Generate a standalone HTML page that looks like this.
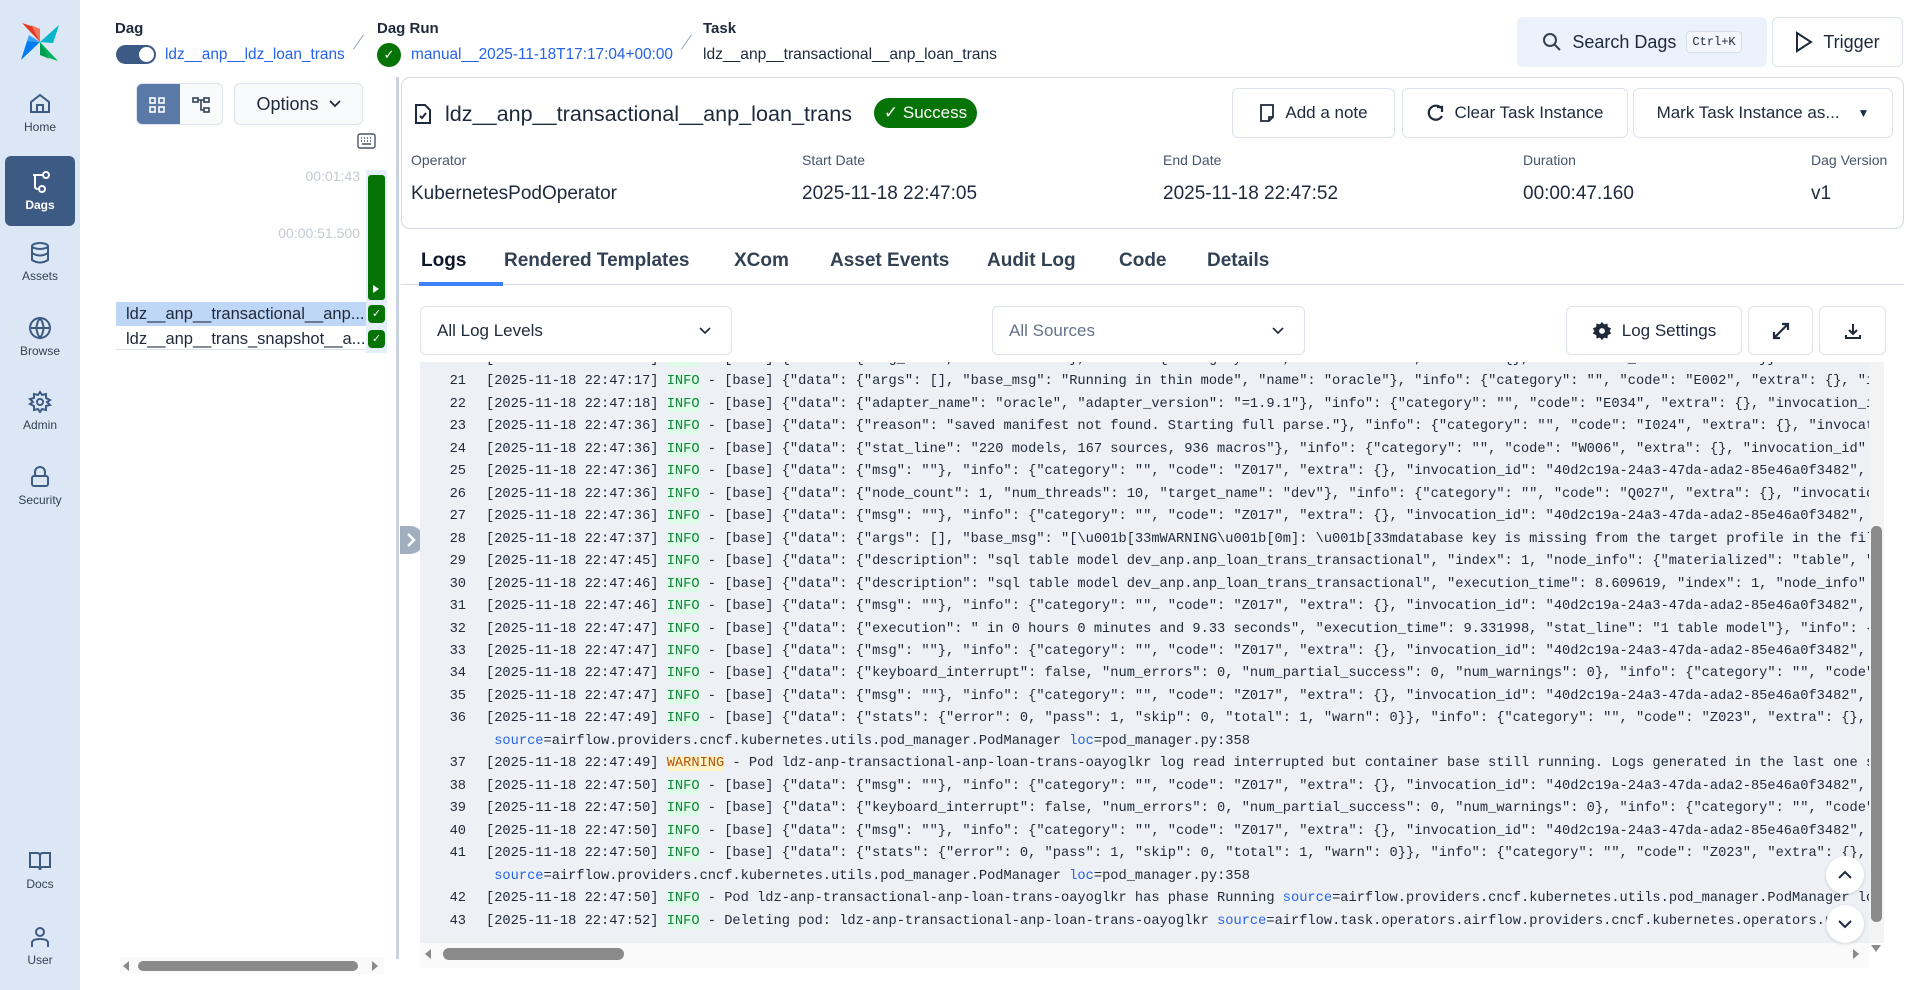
<!DOCTYPE html>
<html><head><meta charset="utf-8"><style>
*{box-sizing:border-box;margin:0;padding:0}
body{width:1918px;height:990px;overflow:hidden;background:#fff;font-family:"Liberation Sans",Arial,sans-serif;color:#1e293b;position:relative}
.abs{position:absolute}
.side{left:0;top:0;width:80px;height:990px;background:#dce7f5}
.nav{position:absolute;left:0;width:80px;text-align:center;font-size:12px;color:#334155}
.nav svg{display:block;margin:0 auto 4px}
.btn{position:absolute;border:1px solid #dde3ea;border-radius:6px;background:#fff;display:flex;align-items:center;justify-content:center;font-size:17px;color:#1e293b;gap:10px}
.lbl{position:absolute;font-size:14px;color:#475569}
.val{position:absolute;font-size:19px;color:#1e293b}
.tab{position:absolute;top:250px;font-size:19px;font-weight:bold;color:#334155}
.log{left:420px;top:362px;width:1449px;height:581px;background:#edf0f5;overflow:hidden;font-family:"Liberation Mono",monospace;font-size:13.7px;color:#1f2937}
.ln{position:absolute;left:0;height:22.46px;line-height:22.46px;white-space:pre;width:1449px}
.ln .n{display:inline-block;width:46px;text-align:right;margin-right:20px}
.i{color:#15803d;background:#dcfce7}
.w{color:#b45309;background:#fef3c7;border-radius:3px}
.s{color:#2563eb}
</style></head><body>
<div class="abs side"></div>
<svg class="abs" style="left:19px;top:21px" width="42" height="42" viewBox="0 0 42 42">
<path d="M21 21 L3 2 L21 8 Z" fill="#e43921"/><path d="M21 21 L21 8 L12 4 Z" fill="#f0745a"/>
<path d="M21 21 L40 4 L34 22 Z" fill="#00c7d4"/><path d="M21 21 L34 22 L40 4Z" fill="#11a9c6" opacity=".6"/>
<path d="M21 21 L39 40 L21 34 Z" fill="#04b05c"/><path d="M21 21 L21 34 L30 38Z" fill="#00873f" opacity=".5"/>
<path d="M21 21 L2 39 L8 20 Z" fill="#017cee"/><path d="M21 21 L8 20 L10 14Z" fill="#3aa0ff"/>
</svg>
<div class="nav" style="top:92px"><svg width="24" height="24" viewBox="0 0 24 24" fill="none" stroke="#3d5a80" stroke-width="2"><path d="M3 10 L12 3 L21 10 V20 H3 Z"/><path d="M9 20 V13 H15 V20"/></svg>Home</div>
<div class="abs" style="left:5px;top:156px;width:70px;height:70px;background:#3d5a85;border-radius:6px"></div>
<div class="nav" style="top:170px;color:#fff;font-weight:bold"><svg width="24" height="24" viewBox="0 0 24 24" fill="none" stroke="#fff" stroke-width="2"><circle cx="18" cy="5" r="3"/><circle cx="14" cy="19" r="3"/><path d="M15 5 H5 M7 5 V17 Q7 19 11 19"/></svg>Dags</div>
<div class="nav" style="top:241px"><svg width="24" height="24" viewBox="0 0 24 24" fill="none" stroke="#3d5a80" stroke-width="2"><ellipse cx="12" cy="5" rx="8" ry="3"/><path d="M4 5 V19 Q12 24 20 19 V5 M4 12 Q12 17 20 12"/></svg>Assets</div>
<div class="nav" style="top:316px"><svg width="24" height="24" viewBox="0 0 24 24" fill="none" stroke="#3d5a80" stroke-width="2"><circle cx="12" cy="12" r="10"/><path d="M2 12 H22 M12 2 Q5 12 12 22 Q19 12 12 2"/></svg>Browse</div>
<div class="nav" style="top:390px"><svg width="24" height="24" viewBox="0 0 24 24" fill="none" stroke="#3d5a80" stroke-width="2"><circle cx="12" cy="12" r="3"/><path d="M12 2 L14 5 L18 4 L18 8 L22 10 L19 12 L22 15 L18 16 L18 20 L14 19 L12 22 L10 19 L6 20 L6 16 L2 14 L5 12 L2 9 L6 8 L6 4 L10 5 Z"/></svg>Admin</div>
<div class="nav" style="top:465px"><svg width="24" height="24" viewBox="0 0 24 24" fill="none" stroke="#3d5a80" stroke-width="2"><rect x="4" y="11" width="16" height="10" rx="2"/><path d="M7 11 V7 a5 5 0 0 1 10 0 V11"/></svg>Security</div>
<div class="nav" style="top:849px"><svg width="24" height="24" viewBox="0 0 24 24" fill="none" stroke="#3d5a80" stroke-width="2"><path d="M2 4 H9 Q12 4 12 7 V21 Q12 18 9 18 H2 Z M22 4 H15 Q12 4 12 7 V21 Q12 18 15 18 H22 Z"/></svg>Docs</div>
<div class="nav" style="top:925px"><svg width="24" height="24" viewBox="0 0 24 24" fill="none" stroke="#3d5a80" stroke-width="2"><circle cx="12" cy="7" r="4"/><path d="M4 22 V18 Q4 14 12 14 Q20 14 20 18 V22"/></svg>User</div>

<div class="abs" style="left:115px;top:20px;font-size:15px;font-weight:bold">Dag</div>
<div class="abs" style="left:116px;top:45px;width:40px;height:19px;border-radius:10px;background:#3d5a85"><div style="position:absolute;right:2px;top:2px;width:15px;height:15px;border-radius:50%;background:#fff"></div></div>
<div class="abs" style="left:165px;top:46px;font-size:15.4px;color:#2563eb">ldz__anp__ldz_loan_trans</div>
<div class="abs" style="left:358px;top:33px;width:1px;height:18px;background:#94a3b8;transform:rotate(35deg)"></div>
<div class="abs" style="left:377px;top:20px;font-size:15px;font-weight:bold">Dag Run</div>
<div class="abs" style="left:377px;top:43px;width:24px;height:24px;border-radius:50%;background:#067306;color:#fff;font-size:13px;text-align:center;line-height:24px">✓</div>
<div class="abs" style="left:411px;top:46px;font-size:15.4px;color:#2563eb">manual__2025-11-18T17:17:04+00:00</div>
<div class="abs" style="left:686px;top:33px;width:1px;height:18px;background:#94a3b8;transform:rotate(35deg)"></div>
<div class="abs" style="left:703px;top:20px;font-size:15px;font-weight:bold">Task</div>
<div class="abs" style="left:703px;top:46px;font-size:15.6px">ldz__anp__transactional__anp_loan_trans</div>
<div class="btn" style="left:1517px;top:17px;width:250px;height:50px;background:#ebf2fb;border-color:#ebf2fb;font-size:18px"><svg width="20" height="20" viewBox="0 0 20 20" fill="none" stroke="#334155" stroke-width="2"><circle cx="8" cy="8" r="6"/><path d="M12.5 12.5 L18 18"/></svg>Search Dags<span style="font-family:'Liberation Mono',monospace;font-size:12px;border:1px solid #d6dde8;border-radius:4px;padding:3px 5px;background:#f3f6fa">Ctrl+K</span></div>
<div class="btn" style="left:1772px;top:17px;width:131px;height:50px;font-size:18px"><svg width="18" height="22" viewBox="0 0 18 22" fill="none" stroke="#1e293b" stroke-width="2"><path d="M2 2 L16 11 L2 20 Z"/></svg>Trigger</div>

<div class="abs" style="left:136px;top:83px;width:87px;height:42px;border:1px solid #dde3ea;border-radius:6px;background:#f8fafc;overflow:hidden"><div style="width:43px;height:42px;background:#5b79a6"></div></div>
<svg class="abs" style="left:148px;top:96px" width="18" height="18" viewBox="0 0 18 18" fill="none" stroke="#fff" stroke-width="1.6"><rect x="2" y="2" width="5" height="5"/><rect x="11" y="2" width="5" height="5"/><rect x="2" y="11" width="5" height="5"/><rect x="11" y="11" width="5" height="5"/></svg>
<svg class="abs" style="left:192px;top:96px" width="18" height="18" viewBox="0 0 18 18" fill="none" stroke="#334155" stroke-width="1.6"><rect x="1" y="2" width="5" height="4"/><rect x="12" y="2" width="5" height="4"/><rect x="12" y="12" width="5" height="4"/><path d="M6 4 H12 M9 4 V14 H12"/></svg>
<div class="btn" style="left:234px;top:83px;width:129px;height:42px;background:#f8fafc;font-size:18px">Options <svg width="12" height="8" viewBox="0 0 12 8" fill="none" stroke="#1e293b" stroke-width="1.8"><path d="M1 1 L6 6 L11 1"/></svg></div>
<svg class="abs" style="left:357px;top:133px" width="19" height="16" viewBox="0 0 19 16" fill="none" stroke="#475569" stroke-width="1.4"><rect x="1" y="1" width="17" height="14" rx="2"/><path d="M4 5h1M7 5h1M10 5h1M13 5h1M4 8h1M7 8h1M10 8h1M13 8h1M5 11h9"/></svg>
<div class="abs" style="right:1558px;top:168px;font-size:14px;color:#c4cad3">00:01:43</div>
<div class="abs" style="right:1558px;top:225px;font-size:14px;color:#c4cad3">00:00:51.500</div>
<div class="abs" style="left:366px;top:170px;width:21px;height:183px;background:#e5eefb"></div>
<div class="abs" style="left:368px;top:175px;width:17px;height:125px;background:#067306;border-radius:3px"></div>
<div class="abs" style="left:373px;top:285px;width:0;height:0;border-left:6px solid #fff;border-top:4px solid transparent;border-bottom:4px solid transparent"></div>
<div class="abs" style="left:116px;top:302px;width:250px;height:24px;background:#bed7f7"></div>
<div class="abs" style="left:116px;top:326px;width:250px;height:24px;border-bottom:1px solid #dbe4f0"></div>
<div class="abs" style="left:126px;top:305px;font-size:16.5px">ldz__anp__transactional__anp...</div>
<div class="abs" style="left:126px;top:330px;font-size:16.5px">ldz__anp__trans_snapshot__a...</div>
<div class="abs" style="left:368px;top:305px;width:17px;height:18px;border-radius:4px;background:#067306;color:#fff;font-size:11px;text-align:center;line-height:18px">✓</div>
<div class="abs" style="left:368px;top:330px;width:17px;height:18px;border-radius:4px;background:#067306;color:#fff;font-size:11px;text-align:center;line-height:18px">✓</div>
<div class="abs" style="left:120px;top:957px;width:264px;height:17px;background:#fafafa"></div>
<div class="abs" style="left:138px;top:961px;width:220px;height:10px;border-radius:5px;background:#8a8a8a"></div>
<div class="abs" style="left:123px;top:961px;border-right:6px solid #8a8a8a;border-top:5px solid transparent;border-bottom:5px solid transparent"></div>
<div class="abs" style="left:372px;top:961px;border-left:6px solid #8a8a8a;border-top:5px solid transparent;border-bottom:5px solid transparent"></div>
<div class="abs" style="left:396px;top:77px;width:3px;height:882px;background:#c9d2de"></div>
<div class="abs" style="left:400px;top:526px;width:24px;height:28px;border-radius:0 14px 14px 0;background:#a0aec0"></div>
<svg class="abs" style="left:405px;top:532px" width="12" height="16" viewBox="0 0 12 16" fill="none" stroke="#fff" stroke-width="2.5"><path d="M3 2 L9 8 L3 14"/></svg>

<div class="abs" style="left:401px;top:77px;width:1503px;height:152px;border:1px solid #d3dae3;border-radius:9px"></div>
<svg class="abs" style="left:414px;top:103px" width="18" height="22" viewBox="0 0 18 22" fill="none" stroke="#1e293b" stroke-width="2"><path d="M2 2 H11 L16 7 V20 H2 Z"/><path d="M6 13 L8 15 L12 10"/></svg>
<div class="abs" style="left:445px;top:101px;font-size:21.6px">ldz__anp__transactional__anp_loan_trans</div>
<div class="abs" style="left:874px;top:98px;width:103px;height:30px;border-radius:15px;background:#067306;color:#fff;font-size:17px;line-height:30px;text-align:center">✓ Success</div>
<div class="btn" style="left:1232px;top:88px;width:163px;height:50px"><svg width="16" height="20" viewBox="0 0 16 20" fill="none" stroke="#1e293b" stroke-width="1.8"><path d="M2 2 H14 V14 L10 18 H2 Z M10 18 V14 H14"/></svg>Add a note</div>
<div class="btn" style="left:1402px;top:88px;width:226px;height:50px"><svg width="18" height="18" viewBox="0 0 18 18" fill="none" stroke="#1e293b" stroke-width="2.2"><path d="M14 4 A7 7 0 1 0 15 12"/><path d="M10 3 L15 3 L15 8" /></svg>Clear Task Instance</div>
<div class="btn" style="left:1633px;top:88px;width:260px;height:50px">Mark Task Instance as... <span style="font-size:12px;margin-left:8px">▼</span></div>
<div class="lbl" style="left:411px;top:152px">Operator</div>
<div class="lbl" style="left:802px;top:152px">Start Date</div>
<div class="lbl" style="left:1163px;top:152px">End Date</div>
<div class="lbl" style="left:1523px;top:152px">Duration</div>
<div class="lbl" style="left:1811px;top:152px">Dag Version</div>
<div class="val" style="left:411px;top:183px">KubernetesPodOperator</div>
<div class="val" style="left:802px;top:183px">2025-11-18 22:47:05</div>
<div class="val" style="left:1163px;top:183px">2025-11-18 22:47:52</div>
<div class="val" style="left:1523px;top:183px">00:00:47.160</div>
<div class="val" style="left:1811px;top:183px">v1</div>

<div class="tab" style="left:421px;color:#0f172a">Logs</div>
<div class="tab" style="left:504px">Rendered Templates</div>
<div class="tab" style="left:734px">XCom</div>
<div class="tab" style="left:830px">Asset Events</div>
<div class="tab" style="left:987px">Audit Log</div>
<div class="tab" style="left:1119px">Code</div>
<div class="tab" style="left:1207px">Details</div>
<div class="abs" style="left:401px;top:284px;width:1503px;height:1px;background:#d4dae3"></div>
<div class="abs" style="left:419px;top:282px;width:84px;height:4px;background:#3b82f6"></div>

<div class="btn" style="left:420px;top:306px;width:312px;height:49px;justify-content:space-between;padding:0 20px 0 16px"><span>All Log Levels</span><svg width="12" height="8" viewBox="0 0 12 8" fill="none" stroke="#1e293b" stroke-width="1.6"><path d="M1 1 L6 6 L11 1"/></svg></div>
<div class="btn" style="left:992px;top:306px;width:313px;height:49px;justify-content:space-between;padding:0 20px 0 16px;color:#64748b"><span>All Sources</span><svg width="12" height="8" viewBox="0 0 12 8" fill="none" stroke="#1e293b" stroke-width="1.6"><path d="M1 1 L6 6 L11 1"/></svg></div>
<div class="btn" style="left:1566px;top:306px;width:176px;height:49px"><svg width="20" height="20" viewBox="0 0 24 24"><path fill="#1e293b" d="M12 1 L14.5 4 L18.5 3 L19 7 L23 9 L21 12 L23 15 L19 17 L18.5 21 L14.5 20 L12 23 L9.5 20 L5.5 21 L5 17 L1 15 L3 12 L1 9 L5 7 L5.5 3 L9.5 4 Z"/><circle cx="12" cy="12" r="3.5" fill="#fff"/></svg>Log Settings</div>
<div class="btn" style="left:1748px;top:306px;width:65px;height:49px"><svg width="20" height="20" viewBox="0 0 20 20" fill="none" stroke="#1e293b" stroke-width="2.2"><path d="M3 17 L17 3 M11 3 H17 V9 M3 11 V17 H9"/></svg></div>
<div class="btn" style="left:1819px;top:306px;width:67px;height:49px"><svg width="18" height="18" viewBox="0 0 18 18" fill="none" stroke="#1e293b" stroke-width="2"><path d="M9 2 V12 M5 8 L9 12 L13 8 M2 13 V16 H16 V13"/></svg></div>

<div class="abs log">
<div style="position:absolute;left:0;top:-13px">
<div class="ln" style="top:0"><span class="n">20</span>[2025-11-18 22:47:17] <span class="i">INFO</span> - [base] {"data": {"msg_": "", "version": ""}, "info": {"category": "", "code": "A001", "extra": {}, "invocation_id": "40d2c19a"}}</div>
<div class="ln" style="top:22.46px"><span class="n">21</span>[2025-11-18 22:47:17] <span class="i">INFO</span> - [base] {"data": {"args": [], "base_msg": "Running in thin mode", "name": "oracle"}, "info": {"category": "", "code": "E002", "extra": {}, "invocation_id": "40d2c19a"}}</div>
<div class="ln" style="top:44.92px"><span class="n">22</span>[2025-11-18 22:47:18] <span class="i">INFO</span> - [base] {"data": {"adapter_name": "oracle", "adapter_version": "=1.9.1"}, "info": {"category": "", "code": "E034", "extra": {}, "invocation_id": "40d2c19a"}}</div>
<div class="ln" style="top:67.38px"><span class="n">23</span>[2025-11-18 22:47:36] <span class="i">INFO</span> - [base] {"data": {"reason": "saved manifest not found. Starting full parse."}, "info": {"category": "", "code": "I024", "extra": {}, "invocation_id": "40d2c19a"}}</div>
<div class="ln" style="top:89.84px"><span class="n">24</span>[2025-11-18 22:47:36] <span class="i">INFO</span> - [base] {"data": {"stat_line": "220 models, 167 sources, 936 macros"}, "info": {"category": "", "code": "W006", "extra": {}, "invocation_id": "40d2c19a"}}</div>
<div class="ln" style="top:112.3px"><span class="n">25</span>[2025-11-18 22:47:36] <span class="i">INFO</span> - [base] {"data": {"msg": ""}, "info": {"category": "", "code": "Z017", "extra": {}, "invocation_id": "40d2c19a-24a3-47da-ada2-85e46a0f3482", "x": 1}}</div>
<div class="ln" style="top:134.76px"><span class="n">26</span>[2025-11-18 22:47:36] <span class="i">INFO</span> - [base] {"data": {"node_count": 1, "num_threads": 10, "target_name": "dev"}, "info": {"category": "", "code": "Q027", "extra": {}, "invocation_id": "40d2c19a"}}</div>
<div class="ln" style="top:157.22px"><span class="n">27</span>[2025-11-18 22:47:36] <span class="i">INFO</span> - [base] {"data": {"msg": ""}, "info": {"category": "", "code": "Z017", "extra": {}, "invocation_id": "40d2c19a-24a3-47da-ada2-85e46a0f3482", "x": 1}}</div>
<div class="ln" style="top:179.68px"><span class="n">28</span>[2025-11-18 22:47:37] <span class="i">INFO</span> - [base] {"data": {"args": [], "base_msg": "[\u001b[33mWARNING\u001b[0m]: \u001b[33mdatabase key is missing from the target profile in the file"}}</div>
<div class="ln" style="top:202.14px"><span class="n">29</span>[2025-11-18 22:47:45] <span class="i">INFO</span> - [base] {"data": {"description": "sql table model dev_anp.anp_loan_trans_transactional", "index": 1, "node_info": {"materialized": "table", "x": 1}}}</div>
<div class="ln" style="top:224.6px"><span class="n">30</span>[2025-11-18 22:47:46] <span class="i">INFO</span> - [base] {"data": {"description": "sql table model dev_anp.anp_loan_trans_transactional", "execution_time": 8.609619, "index": 1, "node_info": {}}}</div>
<div class="ln" style="top:247.06px"><span class="n">31</span>[2025-11-18 22:47:46] <span class="i">INFO</span> - [base] {"data": {"msg": ""}, "info": {"category": "", "code": "Z017", "extra": {}, "invocation_id": "40d2c19a-24a3-47da-ada2-85e46a0f3482", "x": 1}}</div>
<div class="ln" style="top:269.52px"><span class="n">32</span>[2025-11-18 22:47:47] <span class="i">INFO</span> - [base] {"data": {"execution": " in 0 hours 0 minutes and 9.33 seconds", "execution_time": 9.331998, "stat_line": "1 table model"}, "info": {}}</div>
<div class="ln" style="top:291.98px"><span class="n">33</span>[2025-11-18 22:47:47] <span class="i">INFO</span> - [base] {"data": {"msg": ""}, "info": {"category": "", "code": "Z017", "extra": {}, "invocation_id": "40d2c19a-24a3-47da-ada2-85e46a0f3482", "x": 1}}</div>
<div class="ln" style="top:314.44px"><span class="n">34</span>[2025-11-18 22:47:47] <span class="i">INFO</span> - [base] {"data": {"keyboard_interrupt": false, "num_errors": 0, "num_partial_success": 0, "num_warnings": 0}, "info": {"category": "", "code": "Z"}}</div>
<div class="ln" style="top:336.9px"><span class="n">35</span>[2025-11-18 22:47:47] <span class="i">INFO</span> - [base] {"data": {"msg": ""}, "info": {"category": "", "code": "Z017", "extra": {}, "invocation_id": "40d2c19a-24a3-47da-ada2-85e46a0f3482", "x": 1}}</div>
<div class="ln" style="top:359.36px"><span class="n">36</span>[2025-11-18 22:47:49] <span class="i">INFO</span> - [base] {"data": {"stats": {"error": 0, "pass": 1, "skip": 0, "total": 1, "warn": 0}}, "info": {"category": "", "code": "Z023", "extra": {}, "x": 1}}</div>
<div class="ln" style="top:381.82px"><span class="n"></span> <span class="s">source</span>=airflow.providers.cncf.kubernetes.utils.pod_manager.PodManager <span class="s">loc</span>=pod_manager.py:358</div>
<div class="ln" style="top:404.28px"><span class="n">37</span>[2025-11-18 22:47:49] <span class="w">WARNING</span> - Pod ldz-anp-transactional-anp-loan-trans-oayoglkr log read interrupted but container base still running. Logs generated in the last one second</div>
<div class="ln" style="top:426.74px"><span class="n">38</span>[2025-11-18 22:47:50] <span class="i">INFO</span> - [base] {"data": {"msg": ""}, "info": {"category": "", "code": "Z017", "extra": {}, "invocation_id": "40d2c19a-24a3-47da-ada2-85e46a0f3482", "x": 1}}</div>
<div class="ln" style="top:449.2px"><span class="n">39</span>[2025-11-18 22:47:50] <span class="i">INFO</span> - [base] {"data": {"keyboard_interrupt": false, "num_errors": 0, "num_partial_success": 0, "num_warnings": 0}, "info": {"category": "", "code": "Z"}}</div>
<div class="ln" style="top:471.66px"><span class="n">40</span>[2025-11-18 22:47:50] <span class="i">INFO</span> - [base] {"data": {"msg": ""}, "info": {"category": "", "code": "Z017", "extra": {}, "invocation_id": "40d2c19a-24a3-47da-ada2-85e46a0f3482", "x": 1}}</div>
<div class="ln" style="top:494.12px"><span class="n">41</span>[2025-11-18 22:47:50] <span class="i">INFO</span> - [base] {"data": {"stats": {"error": 0, "pass": 1, "skip": 0, "total": 1, "warn": 0}}, "info": {"category": "", "code": "Z023", "extra": {}, "x": 1}}</div>
<div class="ln" style="top:516.58px"><span class="n"></span> <span class="s">source</span>=airflow.providers.cncf.kubernetes.utils.pod_manager.PodManager <span class="s">loc</span>=pod_manager.py:358</div>
<div class="ln" style="top:539.04px"><span class="n">42</span>[2025-11-18 22:47:50] <span class="i">INFO</span> - Pod ldz-anp-transactional-anp-loan-trans-oayoglkr has phase Running <span class="s">source</span>=airflow.providers.cncf.kubernetes.utils.pod_manager.PodManager loc</div>
<div class="ln" style="top:561.5px"><span class="n">43</span>[2025-11-18 22:47:52] <span class="i">INFO</span> - Deleting pod: ldz-anp-transactional-anp-loan-trans-oayoglkr <span class="s">source</span>=airflow.task.operators.airflow.providers.cncf.kubernetes.operators.pod</div>
</div>
</div>
<div class="abs" style="left:1869px;top:362px;width:15px;height:581px;background:#f3f3f3"></div>
<div class="abs" style="left:1871px;top:526px;width:11px;height:396px;border-radius:5px;background:#8a8a8a"></div>
<div class="abs" style="left:1871px;top:945px;border-top:7px solid #8a8a8a;border-left:5px solid transparent;border-right:5px solid transparent"></div>
<div class="abs" style="left:420px;top:943px;width:1449px;height:25px;background:#fafafa"></div>
<div class="abs" style="left:443px;top:948px;width:181px;height:12px;border-radius:6px;background:#8a8a8a"></div>
<div class="abs" style="left:425px;top:949px;border-right:6px solid #8a8a8a;border-top:5px solid transparent;border-bottom:5px solid transparent"></div>
<div class="abs" style="left:1853px;top:949px;border-left:6px solid #8a8a8a;border-top:5px solid transparent;border-bottom:5px solid transparent"></div>
<div class="abs" style="left:1826px;top:856px;width:38px;height:38px;border-radius:50%;background:#fff;box-shadow:0 1px 3px rgba(0,0,0,.15)"><svg style="position:absolute;left:12px;top:14px" width="14" height="9" viewBox="0 0 14 9" fill="none" stroke="#1e293b" stroke-width="2"><path d="M1 8 L7 2 L13 8"/></svg></div>
<div class="abs" style="left:1826px;top:905px;width:38px;height:38px;border-radius:50%;background:#fff;box-shadow:0 1px 3px rgba(0,0,0,.15)"><svg style="position:absolute;left:12px;top:15px" width="14" height="9" viewBox="0 0 14 9" fill="none" stroke="#1e293b" stroke-width="2"><path d="M1 1 L7 7 L13 1"/></svg></div>
</body></html>
